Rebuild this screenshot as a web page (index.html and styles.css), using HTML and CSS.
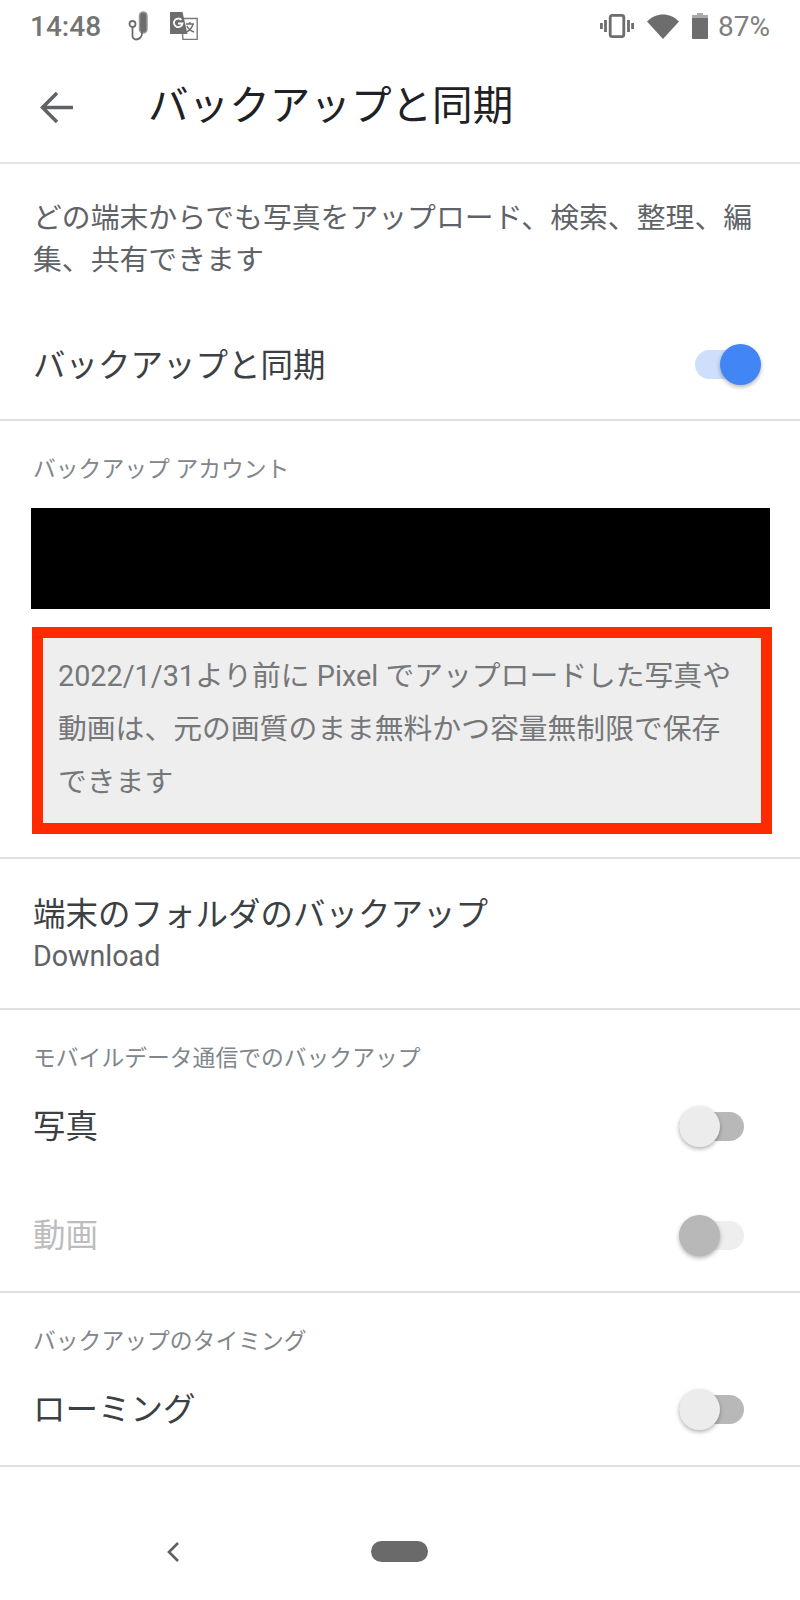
FILE: index.html
```html
<!DOCTYPE html>
<html lang="ja">
<head>
    <meta charset="UTF-8">
    <meta name="viewport" content="width=device-width, initial-scale=1.0">
    <title>バックアップと同期</title>
    <link rel="stylesheet" href="styles.css">
</head>
<body>
    <div class="phone">

        <!-- status bar -->
        <div class="status-bar">
            <div class="status-left">
                <span class="time">14:48</span>
                <svg class="icon-clip" viewBox="0 0 20 30" width="20" height="30">
                    <rect x="11.500" y="1" width="7.500" height="21" rx="3.700" fill="#6d6d6d" stroke="#9a9a9a" stroke-width="1.500"/>
                    <circle cx="4.500" cy="13" r="3" fill="none" stroke="#6d6d6d" stroke-width="1.800"/>
                    <path d="M4.500 16v9a3.500 3.500 0 0 0 3.500 3.500h0a6 6 0 0 0 6-6V21" fill="none" stroke="#6d6d6d" stroke-width="1.800"/>
                </svg>
                <svg class="icon-translate" viewBox="0 0 28 28" width="28" height="28">
                    <path d="M11 6.500h16.200v21H13z" fill="#fff" stroke="#7a7a7a" stroke-width="1.400"/>
                    <path d="M0 0h12.500l5 22H0z" fill="#6d6d6d"/>
                    <path d="M11.500 8a4.300 4.300 0 1 0 1 3.500H8" fill="none" stroke="#fff" stroke-width="1.800"/>
                    <path d="M16 12h8M20 10v2M23 12c-1 4-4 7-7 8M17 14c1 3 4 5 7 6" fill="none" stroke="#6d6d6d" stroke-width="1.400"/>
                </svg>
            </div>
            <div class="status-right">
                <svg viewBox="0 0 34 24" width="34" height="24">
                    <rect x="10.200" y="1.400" width="13.600" height="21.200" rx="2" fill="none" stroke="#6d6d6d" stroke-width="2.800"/>
                    <path d="M5.500 6v12M1.400 9v6M28.500 6v12M32.600 9v6" stroke="#6d6d6d" stroke-width="2.800" fill="none"/>
                </svg>
                <svg class="icon-wifi" viewBox="0 0 32 25" width="32" height="25">
                    <path d="M0 7.500C9 -2 23 -2 32 7.500L16 25z" fill="#6d6d6d"/>
                </svg>
                <svg class="icon-battery" viewBox="0 0 16 26" width="16" height="26">
                    <path d="M5 0h6v2h-6z" fill="#aaa"/>
                    <rect x="0" y="2" width="16" height="4" fill="#aaa"/>
                    <rect x="0" y="5" width="16" height="21" rx="1" fill="#6d6d6d"/>
                </svg>
                <span class="percent">87%</span>
            </div>
        </div>

        <!-- toolbar -->
        <div class="toolbar">
            <svg class="back" viewBox="0 0 33 33" width="33" height="33">
                <path d="M33 16.500H3M17 2L2.500 16.500L17 31" fill="none" stroke="#5f6368" stroke-width="3.500"/>
            </svg>
            <h1>バックアップと同期</h1>
        </div>

        <div class="section section-sync">
            <p class="desc">どの端末からでも写真をアップロード、検索、整理、編集、共有できます</p>
            <div class="row row-main">
                <span class="row-title">バックアップと同期</span>
                <span class="switch on"></span>
            </div>
        </div>

        <div class="section section-account">
            <h2 class="label">バックアップ アカウント</h2>
            <div class="account-black"></div>
            <div class="notice">2022/1/31より前に Pixel でアップロードした写真や動画は、元の画質のまま無料かつ容量無制限で保存できます</div>
        </div>

        <div class="section section-folder">
            <div class="row-title">端末のフォルダのバックアップ</div>
            <div class="row-sub">Download</div>
        </div>

        <div class="section section-mobile">
            <h2 class="label">モバイルデータ通信でのバックアップ</h2>
            <div class="row row-toggle">
                <span class="row-title">写真</span>
                <span class="switch"></span>
            </div>
            <div class="row row-toggle">
                <span class="row-title disabled">動画</span>
                <span class="switch off-disabled"></span>
            </div>
        </div>

        <div class="section section-timing">
            <h2 class="label">バックアップのタイミング</h2>
            <div class="row row-toggle">
                <span class="row-title">ローミング</span>
                <span class="switch"></span>
            </div>
        </div>

        <!-- nav bar -->
        <div class="nav-bar">
            <svg class="nav-back" viewBox="0 0 16 22" width="16" height="22">
                <path d="M13 2L4 11L13 20" fill="none" stroke="#5f5f5f" stroke-width="2.600"/>
            </svg>
            <span class="nav-pill"></span>
        </div>
    </div>
</body>
</html>
```

FILE: styles.css
```css
* {
    padding: 0;
    margin: 0;
    box-sizing: border-box;
}

body {
    margin: 0;
    background-color: #fff;
    font-family: Roboto, "Noto Sans CJK JP", sans-serif;
    color: #3c4043;
}

.phone {
    width: 800px;
    height: 1600px;
    overflow: hidden;
}

.status-bar {
    height: 52px;
    display: flex;
    justify-content: space-between;
    align-items: center;
    padding: 0 30px 0 30px;
    color: #757575;
}

.status-left,
.status-right {
    display: flex;
    align-items: center;
}

.time {
    font-size: 28px;
    font-weight: 500;
    color: #737373;
}

.icon-clip {
    margin-left: 27px;
}

.icon-translate {
    margin-left: 22px;
}

.icon-wifi {
    margin-left: 13px;
}

.icon-battery {
    margin-left: 13px;
}

.percent {
    font-size: 28px;
    margin-left: 10px;
    color: #808080;
}

.toolbar {
    height: 112px;
    display: flex;
    align-items: center;
    padding-left: 40px;
    border-bottom: 2px solid #e6e6e6;
}

.toolbar h1 {
    font-size: 40.600px;
    font-weight: 400;
    margin: 0 0 2px 75px;
    color: #202124;
    line-height: 1;
}

.section {
    border-bottom: 2px solid #e0e0e0;
    padding: 0 33px;
}

.section-sync {
    height: 257px;
    padding-top: 33px;
}

.desc {
    font-size: 28.850px;
    line-height: 42px;
    color: #5f6368;
}

.row {
    display: flex;
    justify-content: space-between;
    align-items: center;
}

.row-main {
    margin-top: 53px;
    height: 60px;
}

.row-title {
    font-size: 32.500px;
    line-height: 44px;
    color: #3c4043;
}

.row-main .row-title {
    padding-top: 4px;
}

.row-title.disabled {
    color: #bdbdbd;
}

.label {
    height: 30px;
    padding-top: 2px;
    font-size: 22.800px;
    font-weight: 400;
    line-height: 30px;
    color: #80868b;
}

.section-account {
    height: 438px;
    padding: 32px 0 0 0;
}

.section-account .label {
    padding-left: 33px;
}

.account-black {
    width: 739px;
    height: 101px;
    margin: 25px 0 0 31px;
    background-color: #000;
}

.notice {
    width: 740px;
    height: 207px;
    margin: 18px 0 0 32px;
    padding: 12px 23px 0 15px;
    background-color: #eee;
    border: 11px solid #ff2a00;
    font-size: 28.800px;
    line-height: 53px;
    color: #757779;
}

.section-folder {
    height: 151px;
    padding-top: 34px;
}

.row-sub {
    font-size: 28.600px;
    line-height: 40px;
    color: #5f6368;
    margin-top: -1px;
}

.section-mobile {
    height: 283px;
    padding-top: 32px;
}

.section-timing {
    height: 174px;
    padding-top: 32px;
}

.row-toggle {
    height: 109px;
    padding-right: 23px;
}

.switch {
    position: relative;
    display: block;
    width: 65px;
    height: 29px;
    border-radius: 15px;
    background-color: #b8b8b8;
}

/* the knob hangs over the end of the track */
.switch::after {
    content: "";
    position: absolute;
    left: 0;
    top: -6px;
    width: 41px;
    height: 41px;
    border-radius: 50%;
    background-color: #ececec;
    box-shadow: 0 2px 4px rgba(0, 0, 0, 0.3);
}

.switch.on {
    background-color: #cddffb;
    margin-right: 7px;
}

.switch.on::after {
    left: 25px;
    background-color: #4285f4;
}

.switch.off-disabled {
    background-color: #eeeeee;
}

.switch.off-disabled::after {
    background-color: #b8b8b8;
}

.nav-bar {
    position: relative;
    height: 133px;
}

.nav-back {
    position: absolute;
    left: 165px;
    top: 74px;
}

.nav-pill {
    position: absolute;
    left: 371px;
    top: 74px;
    width: 57px;
    height: 21px;
    border-radius: 11px;
    background-color: #6a6a6a;
}
```
